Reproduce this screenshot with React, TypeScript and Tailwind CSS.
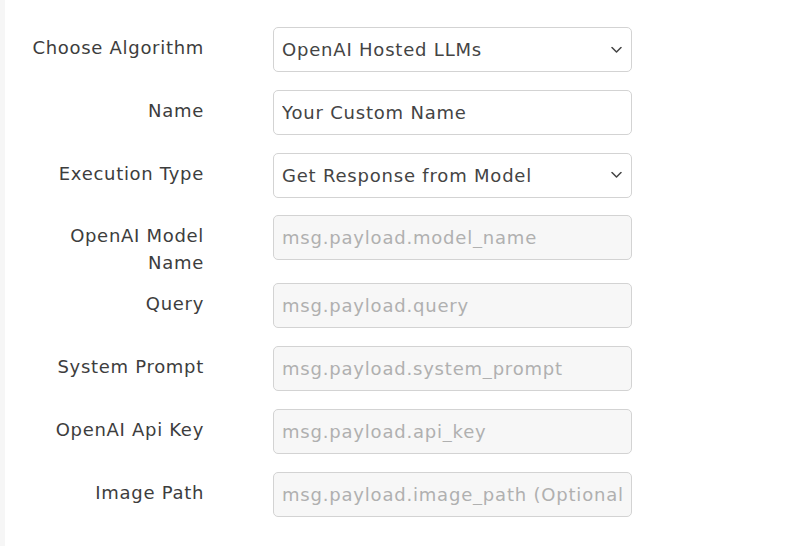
import { ChangeEvent, useState } from "react";

const fontStack = { fontFamily: '"DejaVu Sans", "Noto Sans", sans-serif' };

function Chevron() {
  return (
    <svg
      className="pointer-events-none absolute right-[10px] top-1/2 -translate-y-1/2"
      width="11"
      height="7"
      viewBox="0 0 11 7"
      fill="none"
    >
      <path d="M1 1l4.5 4.5L10 1" stroke="#444" strokeWidth="1.5" strokeLinecap="round" strokeLinejoin="round" />
    </svg>
  );
}

function Row({ label, children }: { label: string; children: React.ReactNode }) {
  return (
    <div className="flex items-start">
      <label className="w-[182px] shrink-0 pt-[7px] pb-[7px] text-right text-[18px] leading-[27px] tracking-[0.7px] text-[#3d3d3d]">
        {label}
      </label>
      <div className="ml-[69px] mb-[17.8px] w-[359px] shrink-0">{children}</div>
    </div>
  );
}

const boxCls =
  "block h-[45px] w-full rounded-[5px] border border-[#d3d3d3] pl-[8px] pr-[8px] text-[18px] tracking-[0.8px] outline-none";

export default function App() {
  const [algorithm, setAlgorithm] = useState("openai");
  const [name, setName] = useState("Your Custom Name");
  const [execType, setExecType] = useState("response");

  const placeholders: { label: string; value: string }[] = [
    { label: "OpenAI Model Name", value: "msg.payload.model_name" },
    { label: "Query", value: "msg.payload.query" },
    { label: "System Prompt", value: "msg.payload.system_prompt" },
    { label: "OpenAI Api Key", value: "msg.payload.api_key" },
    { label: "Image Path", value: "msg.payload.image_path (Optional)" },
  ];

  return (
    <div className="flex h-[546px] w-full bg-white" style={fontStack}>
      <div className="w-[5px] shrink-0 bg-[#f6f6f6]" />
      <div className="flex flex-col pl-[17px] pt-[27px]">
        <Row label="Choose Algorithm">
          <div className="relative">
            <select
              value={algorithm}
              onChange={(e: ChangeEvent<HTMLSelectElement>) => setAlgorithm(e.target.value)}
              className={`${boxCls} appearance-none bg-white text-[#444]`}
              style={fontStack}
            >
              <option value="openai">OpenAI Hosted LLMs</option>
            </select>
            <Chevron />
          </div>
        </Row>
        <Row label="Name">
          <input
            value={name}
            onChange={(e) => setName(e.target.value)}
            className={`${boxCls} bg-white text-[#444]`}
            style={fontStack}
          />
        </Row>
        <Row label="Execution Type">
          <div className="relative">
            <select
              value={execType}
              onChange={(e: ChangeEvent<HTMLSelectElement>) => setExecType(e.target.value)}
              className={`${boxCls} appearance-none bg-white text-[#444]`}
              style={fontStack}
            >
              <option value="response">Get Response from Model</option>
            </select>
            <Chevron />
          </div>
        </Row>
        {placeholders.map((p) => (
          <Row key={p.label} label={p.label}>
            <input
              disabled
              placeholder={p.value}
              className={`${boxCls} bg-[#f7f7f7] placeholder:text-[#b0b0b0]`}
              style={fontStack}
            />
          </Row>
        ))}
      </div>
    </div>
  );
}
